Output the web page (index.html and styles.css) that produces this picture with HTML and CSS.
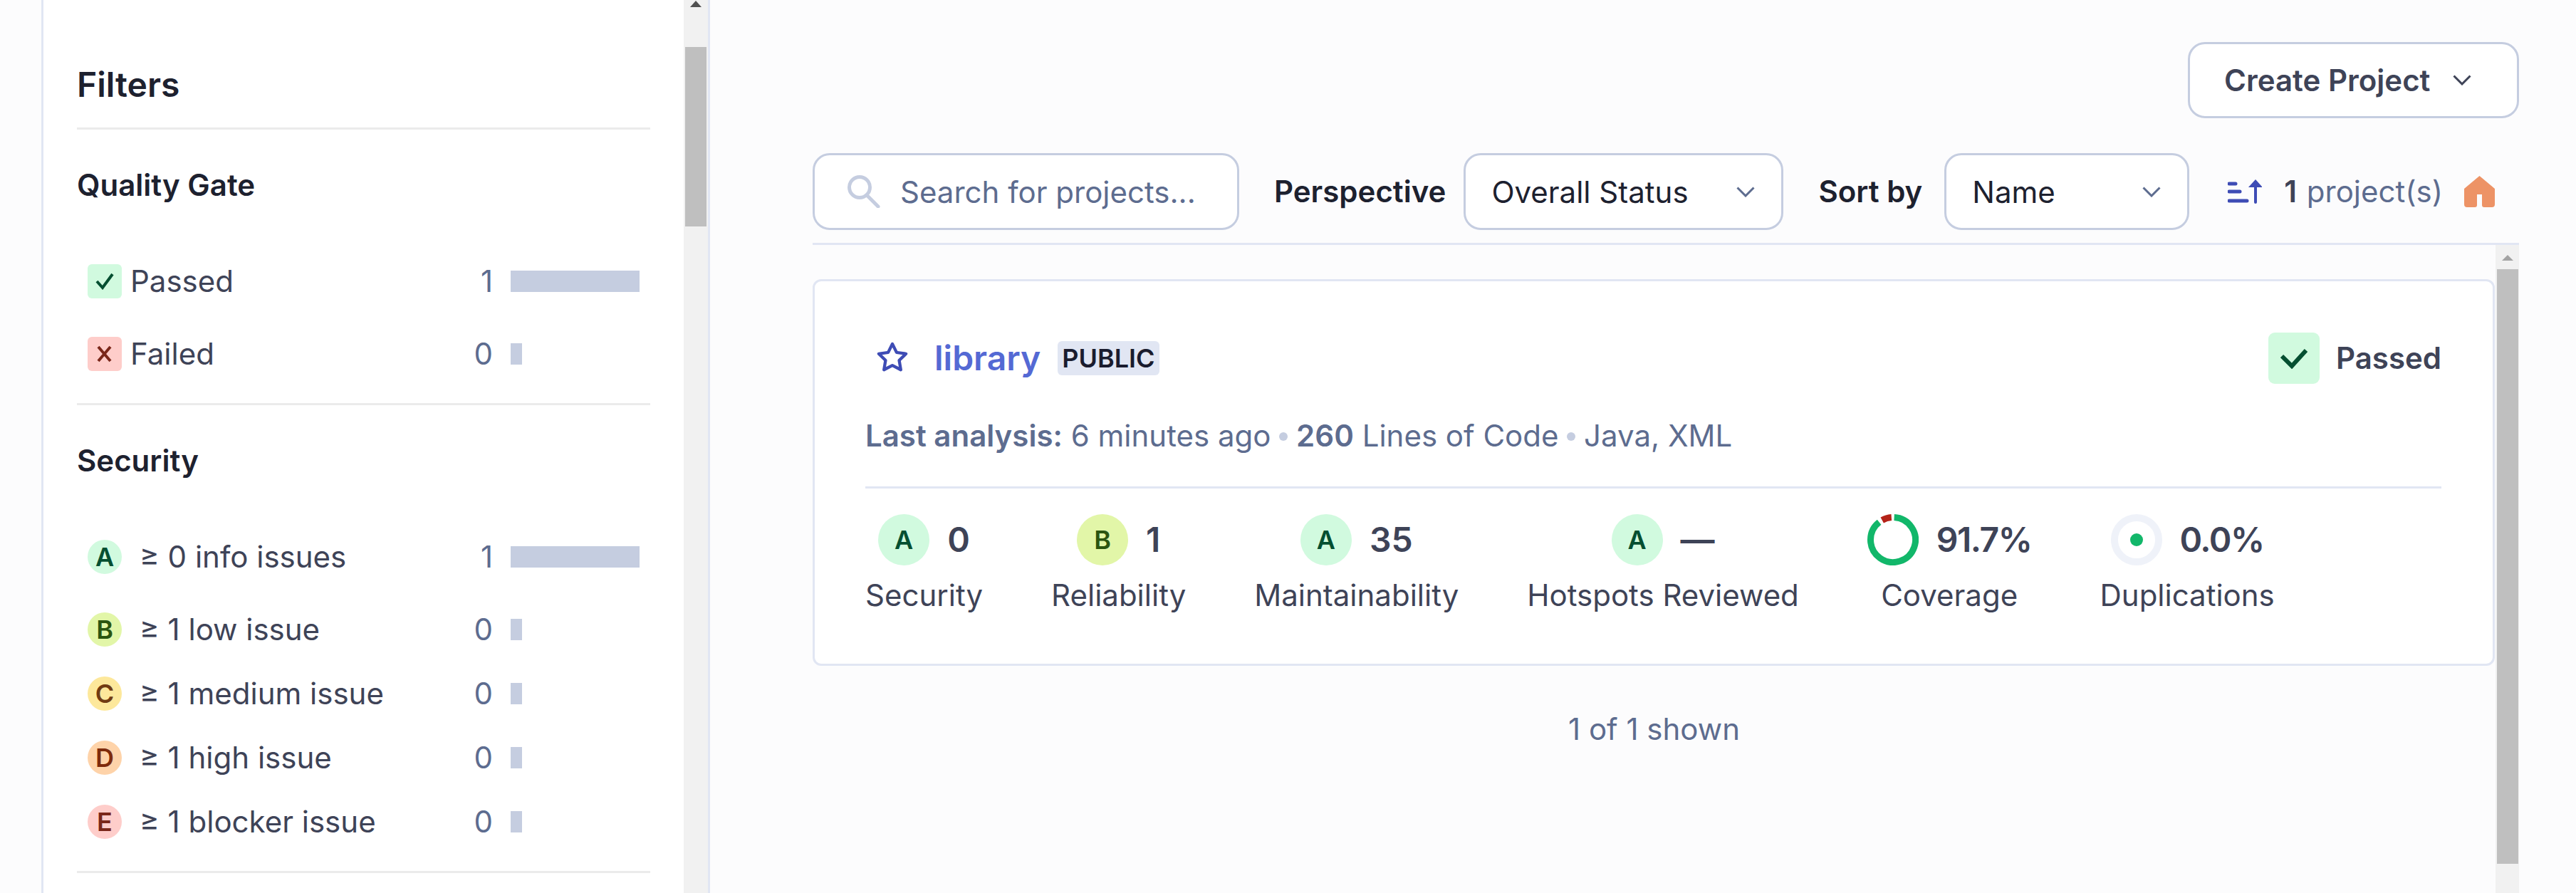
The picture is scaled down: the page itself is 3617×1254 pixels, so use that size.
FILE: index.html
```html
<!DOCTYPE html>
<html lang="en">

<head>
    <meta charset="UTF-8">
    <meta name="viewport" content="width=device-width, initial-scale=1.0">
    <title>Projects</title>
    <link rel="stylesheet" href="styles.css">
</head>

<body>
    <aside class="sidebar">
        <div class="filters">
            <h2 class="filters-title">Filters</h2>

            <section class="facet">
                <h3 class="facet-title">Quality Gate</h3>
                <div class="facet-row facet-row-wide">
                    <span class="status status-ok">
                        <svg width="26" height="24" viewBox="0 0 26 24"><path d="M2 12l8 9L24 2" fill="none" stroke="#054f31" stroke-width="4" /></svg>
                    </span>
                    <span class="facet-label">Passed</span>
                    <span class="facet-count">1</span>
                    <span class="facet-bar"><span class="bar bar-full"></span></span>
                </div>
                <div class="facet-row">
                    <span class="status status-error">
                        <svg width="22" height="24" viewBox="0 0 22 24"><path d="M2 2l17 20M19 2L2 22" fill="none" stroke="#7a271a" stroke-width="4" /></svg>
                    </span>
                    <span class="facet-label">Failed</span>
                    <span class="facet-count">0</span>
                    <span class="facet-bar"><span class="bar bar-zero"></span></span>
                </div>
            </section>

            <section class="facet facet-ratings">
                <h3 class="facet-title">Security</h3>
                <div class="facet-row facet-row-wide">
                    <span class="grade grade-small grade-a">A</span>
                    <span class="facet-label facet-label-grade">≥ 0 info issues</span>
                    <span class="facet-count">1</span>
                    <span class="facet-bar"><span class="bar bar-full"></span></span>
                </div>
                <div class="facet-row facet-row-tight">
                    <span class="grade grade-small grade-b">B</span>
                    <span class="facet-label facet-label-grade">≥ 1 low issue</span>
                    <span class="facet-count">0</span>
                    <span class="facet-bar"><span class="bar bar-zero"></span></span>
                </div>
                <div class="facet-row facet-row-tight">
                    <span class="grade grade-small grade-c">C</span>
                    <span class="facet-label facet-label-grade">≥ 1 medium issue</span>
                    <span class="facet-count">0</span>
                    <span class="facet-bar"><span class="bar bar-zero"></span></span>
                </div>
                <div class="facet-row facet-row-tight">
                    <span class="grade grade-small grade-d">D</span>
                    <span class="facet-label facet-label-grade">≥ 1 high issue</span>
                    <span class="facet-count">0</span>
                    <span class="facet-bar"><span class="bar bar-zero"></span></span>
                </div>
                <div class="facet-row">
                    <span class="grade grade-small grade-e">E</span>
                    <span class="facet-label facet-label-grade">≥ 1 blocker issue</span>
                    <span class="facet-count">0</span>
                    <span class="facet-bar"><span class="bar bar-zero"></span></span>
                </div>
            </section>
        </div>

        <div class="scrollbar scrollbar-side">
            <span class="scroll-arrow scroll-arrow-dark"></span>
            <span class="scroll-thumb"></span>
        </div>
    </aside>

    <main class="content">
        <div class="page-actions">
            <button class="create-button" type="button">
                Create Project
                <svg width="26" height="15" viewBox="0 0 26 15"><path d="M1.5 1.5L13 13 24.5 1.5" fill="none" stroke="#3e4357" stroke-width="3" /></svg>
            </button>
        </div>

        <div class="toolbar">
            <label class="search">
                <svg width="46" height="46" viewBox="0 0 46 46"><circle cx="17" cy="17" r="14.5" fill="none" stroke="#c5cde0" stroke-width="5" /><path d="M27 28l16 16" fill="none" stroke="#c5cde0" stroke-width="5" stroke-linecap="round" /></svg>
                <input class="search-input" type="text" placeholder="Search for projects...">
            </label>

            <span class="toolbar-label toolbar-label-perspective">Perspective</span>
            <div class="select select-perspective">
                <span class="select-value">Overall Status</span>
                <svg width="26" height="15" viewBox="0 0 26 15"><path d="M1.5 1.5L13 13 24.5 1.5" fill="none" stroke="#5d6c8f" stroke-width="3" /></svg>
            </div>

            <span class="toolbar-label toolbar-label-sort">Sort by</span>
            <div class="select select-sort">
                <span class="select-value">Name</span>
                <svg width="26" height="15" viewBox="0 0 26 15"><path d="M1.5 1.5L13 13 24.5 1.5" fill="none" stroke="#5d6c8f" stroke-width="3" /></svg>
            </div>

            <svg class="sort-icon" width="48" height="34" viewBox="0 0 48 34">
                <path d="M2 6h9M2 17h15M2 30h25" fill="none" stroke="#3e4cb5" stroke-width="5" stroke-linecap="round" />
                <path d="M39 10v22" fill="none" stroke="#3e4cb5" stroke-width="4" stroke-linecap="round" />
                <path d="M39 0l10 11H29z" fill="#3e4cb5" />
            </svg>
            <span class="project-count"><strong>1</strong> project(s)</span>
            <svg class="home-icon" width="43" height="44" viewBox="0 0 43 44">
                <path d="M21.500 0L43 18v22a4 4 0 0 1-4 4h-11a3 3 0 0 1-3-3V26h-7v15a3 3 0 0 1-3 3H4a4 4 0 0 1-4-4V18z" fill="#ed9366" />
            </svg>
        </div>

        <div class="results">
            <div class="results-list">
                <article class="card">
                    <header class="card-head">
                        <svg class="star-icon" width="46" height="46" viewBox="0 0 16 16"><path d="M8 .25a.75.75 0 01.673.418l1.882 3.815 4.21.612a.75.75 0 01.416 1.279l-3.046 2.97.719 4.192a.75.75 0 01-1.088.791L8 12.347l-3.766 1.98a.75.75 0 01-1.088-.79l.72-4.194L.818 6.374a.75.75 0 01.416-1.28l4.21-.611L7.327.668A.75.75 0 018 .25zm0 2.445L6.615 5.5a.75.75 0 01-.564.41l-3.097.45 2.24 2.184a.75.75 0 01.216.664l-.528 3.084 2.769-1.456a.75.75 0 01.698 0l2.77 1.456-.53-3.084a.75.75 0 01.216-.664l2.24-2.183-3.096-.45a.75.75 0 01-.564-.41L8 2.694v.001z" fill="#3e4cb5" /></svg>
                        <a class="project-name" href="#">library</a>
                        <span class="visibility">PUBLIC</span>
                        <span class="gate">
                            <span class="gate-badge">
                                <svg width="38" height="30" viewBox="0 0 38 30"><path d="M2 12l14 14L36 4" fill="none" stroke="#054f31" stroke-width="6" /></svg>
                            </span>
                            Passed
                        </span>
                    </header>

                    <p class="card-meta">
                        <strong>Last analysis:</strong> 6 minutes ago
                        <span class="meta-dot"></span>
                        <strong>260</strong> Lines of Code
                        <span class="meta-dot"></span>
                        Java, XML
                    </p>

                    <div class="measures">
                        <div class="measure">
                            <div class="measure-value"><span class="grade grade-large grade-a">A</span>0</div>
                            <div class="measure-label">Security</div>
                        </div>
                        <div class="measure">
                            <div class="measure-value"><span class="grade grade-large grade-b">B</span>1</div>
                            <div class="measure-label">Reliability</div>
                        </div>
                        <div class="measure">
                            <div class="measure-value"><span class="grade grade-large grade-a">A</span>35</div>
                            <div class="measure-label">Maintainability</div>
                        </div>
                        <div class="measure">
                            <div class="measure-value"><span class="grade grade-large grade-a">A</span>—</div>
                            <div class="measure-label">Hotspots Reviewed</div>
                        </div>
                        <div class="measure">
                            <div class="measure-value measure-percent">
                                <svg class="donut" width="72" height="72" viewBox="0 0 72 72">
                                    <path d="M37.650 4.540A31.500 31.500 0 1 1 16.600 11.180" fill="none" stroke="#12b76a" stroke-width="9" />
                                    <path d="M20.730 8.450A31.500 31.500 0 0 1 33.800 4.580" fill="none" stroke="#b42318" stroke-width="9" />
                                </svg>
                                91.7%
                            </div>
                            <div class="measure-label">Coverage</div>
                        </div>
                        <div class="measure">
                            <div class="measure-value measure-percent">
                                <svg class="donut" width="72" height="72" viewBox="0 0 72 72">
                                    <circle cx="36" cy="36" r="31" fill="none" stroke="#eff2f9" stroke-width="10" />
                                    <circle cx="36" cy="36" r="9" fill="#12b76a" />
                                </svg>
                                0.0%
                            </div>
                            <div class="measure-label">Duplications</div>
                        </div>
                    </div>
                </article>

                <p class="shown">1 of 1 shown</p>
            </div>

            <div class="scrollbar scrollbar-list">
                <span class="scroll-arrow scroll-arrow-light"></span>
                <span class="scroll-thumb"></span>
            </div>
        </div>
    </main>
</body>

</html>
```

FILE: styles.css
```css
* {
    box-sizing: border-box;
}

html,
body {
    height: 100%;
}

body {
    margin: 0;
    display: flex;
    overflow: hidden;
    background-color: #fcfcfd;
    color: #3e4357;
    font-family: Inter, "Liberation Sans", sans-serif;
    font-size: 42px;
    line-height: 60px;
}

h2,
h3,
p {
    margin: 0;
}

/* sidebar */

.sidebar {
    display: flex;
    flex: none;
    width: 939px;
    margin-left: 58px;
    background-color: #fff;
    border-left: 3px solid #e1e6f3;
    border-right: 3px solid #e1e6f3;
}

.filters {
    flex: 1;
    padding: 83px 47px 0 47px;
}

.filters-title {
    padding-bottom: 24px;
    border-bottom: 3px solid #ebebeb;
    color: #1d212f;
    font-size: 48px;
    font-weight: 600;
    line-height: 72px;
}

.facet {
    padding: 48px 0 45px;
    border-bottom: 3px solid #ebebeb;
}

.facet-title {
    margin-bottom: 81px;
    color: #1d212f;
    font-size: 42px;
    font-weight: 600;
    line-height: 60px;
}

.facet-row {
    display: flex;
    align-items: center;
    height: 48px;
    padding: 0 15px;
}

.facet-row-wide {
    margin-bottom: 54px;
}

.facet-row-tight {
    margin-bottom: 42px;
}

.facet-label {
    flex: 1;
    margin-left: 12px;
}

.facet-label-grade {
    margin-left: 25px;
}

.facet-count {
    color: #5d6c8f;
}

.facet-bar {
    width: 181px;
    margin-left: 25px;
}

.bar {
    display: block;
    height: 30px;
    background-color: #c5cde0;
}

.bar-full {
    width: 181px;
}

.bar-zero {
    width: 16px;
}

.status {
    display: flex;
    align-items: center;
    justify-content: center;
    width: 48px;
    height: 48px;
    border-radius: 6px;
}

.status-ok {
    background-color: #d1fadf;
}

.status-error {
    background-color: #fecdca;
}

/* ratings */

.grade {
    display: inline-flex;
    flex: none;
    align-items: center;
    justify-content: center;
    border-radius: 50%;
    font-size: 36px;
    font-weight: 600;
    letter-spacing: 0;
}

.grade-small {
    width: 48px;
    height: 48px;
}

.grade-large {
    width: 72px;
    height: 72px;
}

.grade-a {
    background-color: #d1fadf;
    color: #054f31;
}

.grade-b {
    background-color: #e2f6a8;
    color: #2b5510;
}

.grade-c {
    background-color: #fde89b;
    color: #713b12;
}

.grade-d {
    background-color: #fed3a9;
    color: #7e2b0c;
}

.grade-e {
    background-color: #fecdca;
    color: #7a271a;
}

/* scrollbars */

.scrollbar {
    display: flex;
    flex: none;
    flex-direction: column;
    align-items: center;
    background-color: #f1f1f1;
}

.scrollbar-side {
    width: 34px;
}

.scrollbar-list {
    width: 33px;
}

.scroll-arrow {
    width: 0;
    height: 0;
    border-left: 8px solid transparent;
    border-right: 8px solid transparent;
}

.scroll-arrow-dark {
    margin: 1px 0 56px;
    border-bottom: 9px solid #505050;
}

.scroll-arrow-light {
    margin: 14px 0 12px;
    border-bottom: 8px solid #a3a3a3;
}

.scroll-thumb {
    width: 30px;
    background-color: #bfbfbf;
}

.scrollbar-side .scroll-thumb {
    height: 252px;
}

.scrollbar-list .scroll-thumb {
    height: 835px;
}

/* main column */

.content {
    display: flex;
    flex: 1;
    flex-direction: column;
    padding: 59px 80px 0 144px;
}

.page-actions {
    display: flex;
    justify-content: flex-end;
}

.create-button {
    display: flex;
    align-items: center;
    justify-content: space-between;
    width: 465px;
    height: 107px;
    padding: 0 64px 0 48px;
    background-color: #fff;
    border: 3px solid #c5cde0;
    border-radius: 24px;
    color: #3e4357;
    font: 600 42px/60px Inter, "Liberation Sans", sans-serif;
}

.toolbar {
    display: flex;
    align-items: center;
    height: 129px;
    margin-top: 49px;
    padding-bottom: 18px;
    border-bottom: 3px solid #e1e6f3;
}

.search {
    display: flex;
    flex: none;
    align-items: center;
    width: 599px;
    height: 108px;
    padding-left: 46px;
    background-color: #fff;
    border: 3px solid #c5cde0;
    border-radius: 24px;
}

.search-input {
    flex: 1;
    width: 100%;
    margin-left: 28px;
    padding: 2px 0 0;
    background: transparent;
    border: 0;
    outline: 0;
    font: 400 42px/60px Inter, "Liberation Sans", sans-serif;
}

.search-input::placeholder {
    color: #5d6c8f;
    opacity: 1;
}

.toolbar-label {
    color: #1d212f;
    font-weight: 600;
}

.toolbar-label-perspective {
    margin-left: 49px;
}

.toolbar-label-sort {
    margin-left: 49px;
}

.select {
    display: flex;
    flex: none;
    align-items: center;
    justify-content: space-between;
    height: 108px;
    padding: 0 37px 0 36px;
    background-color: #fff;
    border: 3px solid #c5cde0;
    border-radius: 24px;
    color: #1d212f;
}

.select-value {
    padding-top: 2px;
}

.select-perspective {
    width: 449px;
    margin-left: 25px;
}

.select-sort {
    width: 344px;
    margin-left: 31px;
}

.sort-icon {
    flex: none;
    margin-left: 54px;
}

.project-count {
    margin-left: 31px;
    color: #5d6c8f;
    word-spacing: 2px;
}

.project-count strong {
    color: #3e4357;
    font-weight: 600;
}

.home-icon {
    flex: none;
    margin-left: 30px;
}

.results {
    display: flex;
    flex: 1;
}

.results-list {
    flex: 1;
    padding-top: 48px;
}

.card {
    height: 543px;
    margin-right: 1px;
    padding: 72px 72px 0 71px;
    background-color: #fff;
    border: 3px solid #e1e6f3;
    border-radius: 12px;
}

.card-head {
    display: flex;
    align-items: center;
    height: 72px;
}

.star-icon {
    flex: none;
    margin-left: 15px;
}

.project-name {
    margin-left: 36px;
    color: #5469d4;
    font-size: 48px;
    font-weight: 600;
    text-decoration: none;
}

.visibility {
    margin-left: 24px;
    padding: 0 6px;
    background-color: #e1e6f3;
    border-radius: 6px;
    color: #1a1c2e;
    font-size: 36px;
    font-weight: 600;
    line-height: 48px;
}

.gate {
    display: flex;
    align-items: center;
    margin-left: auto;
    font-weight: 600;
}

.gate-badge {
    display: flex;
    align-items: center;
    justify-content: center;
    width: 72px;
    height: 72px;
    margin-right: 23px;
    background-color: #d1fadf;
    border-radius: 9px;
}

.card-meta {
    margin-top: 43px;
    padding-bottom: 41px;
    border-bottom: 3px solid #e1e6f3;
    color: #5d6c8f;
}

.card-meta strong {
    font-weight: 600;
}

.meta-dot {
    display: inline-block;
    width: 12px;
    height: 12px;
    margin-bottom: 5px;
    background-color: #c5cde0;
    border-radius: 50%;
    vertical-align: middle;
}

.measures {
    display: flex;
    gap: 96px;
    margin-top: 36px;
}

.measure {
    display: flex;
    flex-direction: column;
    align-items: center;
}

.measure-value {
    display: flex;
    align-items: center;
    gap: 25px;
    height: 72px;
    font-size: 48px;
    font-weight: 600;
}

.measure-percent {
    letter-spacing: -1.5px;
}

.donut {
    flex: none;
}

.measure-label {
    margin-top: 12px;
}

.shown {
    margin-top: 59px;
    color: #5d6c8f;
    text-align: center;
}
```
